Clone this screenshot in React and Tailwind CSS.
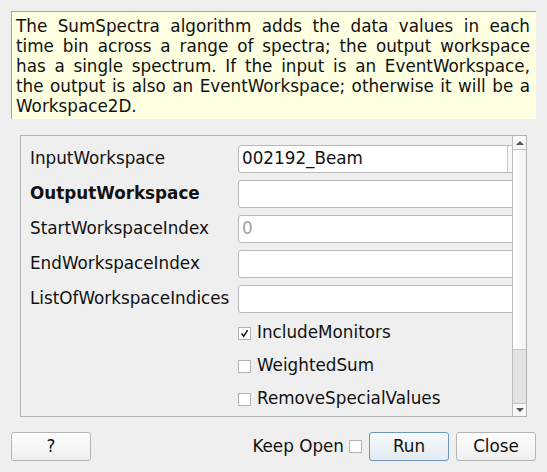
const descLines = [
  "The SumSpectra algorithm adds the data values in each",
  "time bin across a range of spectra; the output workspace",
  "has a single spectrum. If the input is an EventWorkspace,",
  "the output is also an EventWorkspace; otherwise it will be a",
  "Workspace2D.",
];

const fields = [
  { label: "InputWorkspace", value: "002192_Beam", combo: true },
  { label: "OutputWorkspace", bold: true },
  { label: "StartWorkspaceIndex", placeholder: "0" },
  { label: "EndWorkspaceIndex" },
  { label: "ListOfWorkspaceIndices" },
];

const checks = [
  { label: "IncludeMonitors", checked: true },
  { label: "WeightedSum" },
  { label: "RemoveSpecialValues" },
];

function CheckBox({ checked }) {
  return (
    <div className="w-[13px] h-[13px] shrink-0 border border-[#b3b3b3] bg-white flex items-center justify-center">
      {checked && (
        <svg width="9" height="9" viewBox="0 0 9 9">
          <path d="M1.5 4.5 L3.7 7.3 L7.6 1.2" fill="none" stroke="#111" strokeWidth="1.5" />
        </svg>
      )}
    </div>
  );
}

function Field({ field }) {
  if (field.combo) {
    return (
      <div className="flex h-[28px] w-[290px] shrink-0 rounded-[3px] border border-[#b9b9b9] bg-white">
        <div className="w-[268px] pl-[3px] flex items-center">{field.value}</div>
        <div className="flex-1 border-l border-[#c8c8c8] bg-gradient-to-r from-[#fafafa] to-[#ececec]" />
      </div>
    );
  }
  return (
    <div className="flex h-[28px] w-[290px] shrink-0 items-center rounded-[3px] border border-[#b9b9b9] bg-white pl-[3px] text-[#a0a0a0]">
      {field.placeholder}
    </div>
  );
}

function Button({ children, primary, className }) {
  return (
    <div
      className={
        "flex h-[29px] w-[80px] items-center justify-center rounded-[3px] border " +
        (primary
          ? "border-[#6f97bd] bg-gradient-to-b from-[#f6f9fc] to-[#e3ebf2] "
          : "border-[#b5b5b5] bg-gradient-to-b from-[#fdfdfd] to-[#efefef] ") +
        (className || "")
      }
    >
      {children}
    </div>
  );
}

export default function App() {
  return (
    <div className="w-[547px] h-[472px] overflow-hidden bg-[#efefef] pt-[11px] font-['DejaVu_Sans',sans-serif] text-[16.8px] text-[#111]">
      <div className="ml-[11px] h-[108px] w-[525px] border-t border-l border-[#a3a3a3] bg-[#ffffe1] pl-[4px] pr-[6px] pt-[4px] leading-[20px]">
        {descLines.map((line, i) => (
          <div
            key={i}
            className={i < descLines.length - 1 ? "text-justify [text-align-last:justify]" : ""}
          >
            {line}
          </div>
        ))}
      </div>

      <div className="ml-[20px] mt-[16px] flex h-[282px] w-[507px] border border-[#b4b4b4]">
        <div className="flex w-[491px] flex-col gap-[7px] overflow-hidden pl-[9px] pt-[9px]">
          {fields.map((f) => (
            <div key={f.label} className="flex h-[28px] items-center">
              <div className={"w-[208px] shrink-0 " + (f.bold ? "font-bold" : "")}>{f.label}</div>
              <Field field={f} />
            </div>
          ))}
          {checks.map((c) => (
            <div key={c.label} className="flex h-[26px] items-center pl-[208px]">
              <CheckBox checked={c.checked} />
              <span className="ml-[6px]">{c.label}</span>
            </div>
          ))}
        </div>
        <div className="flex w-[14px] flex-col border-l border-[#bcbcbc]">
          <div className="flex h-[14px] items-center justify-center border-b border-[#c4c4c4] bg-[#f7f7f7]">
            <svg width="8" height="5" viewBox="0 0 8 5">
              <path d="M0 5 L4 1 L8 5 Z" fill="#555" />
            </svg>
          </div>
          <div className="h-[200px] bg-gradient-to-r from-[#ffffff] to-[#f1f1f1] border-b border-[#c8c8c8]" />
          <div className="flex-1 bg-[#e3e3e3]" />
          <div className="flex h-[13px] items-center justify-center border-t border-[#c4c4c4] bg-[#f7f7f7]">
            <svg width="8" height="5" viewBox="0 0 8 5">
              <path d="M0 0 L8 0 L4 4 Z" fill="#555" />
            </svg>
          </div>
        </div>
      </div>

      <div className="mt-[15px] flex items-center px-[11px]">
        <Button>?</Button>
        <div className="flex-1" />
        <span>Keep Open</span>
        <div className="ml-[5px] mr-[7px]">
          <CheckBox />
        </div>
        <Button primary>Run</Button>
        <Button className="ml-[7px]">Close</Button>
      </div>
    </div>
  );
}
